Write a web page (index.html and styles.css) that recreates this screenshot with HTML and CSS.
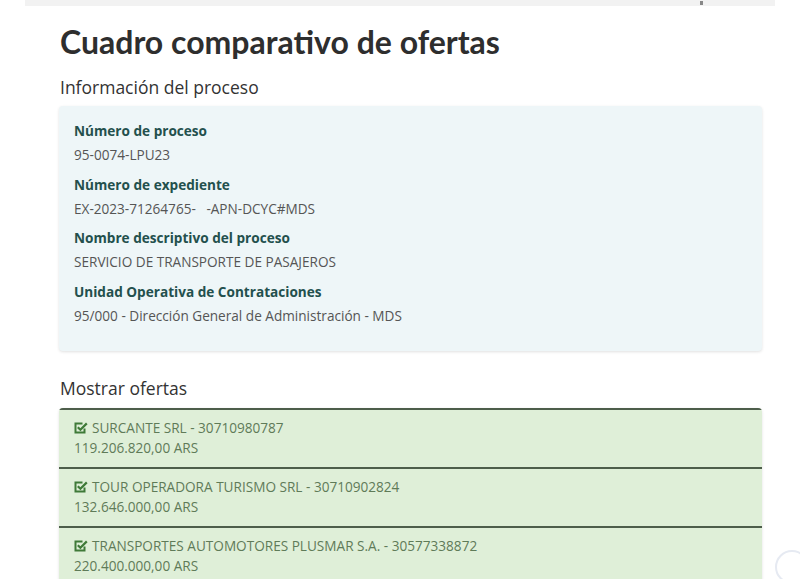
FILE: index.html
```html
<!DOCTYPE html>
<html lang="es">

<head>
    <meta charset="UTF-8">
    <meta name="viewport" content="width=device-width, initial-scale=1.0">
    <title>Cuadro comparativo de ofertas</title>
    <link rel="stylesheet" href="styles.css">
</head>

<body>
    <div class="topbar"><span class="topbar-mark"></span></div>

    <main class="page">
        <h1 class="title">Cuadro comparativo de ofertas</h1>

        <h2 class="section">Información del proceso</h2>
        <div class="info">
            <div class="field">
                <div class="label">Número de proceso</div>
                <div class="value">95-0074-LPU23</div>
            </div>
            <div class="field">
                <div class="label">Número de expediente</div>
                <div class="value">EX-2023-71264765- &nbsp; -APN-DCYC#MDS</div>
            </div>
            <div class="field">
                <div class="label">Nombre descriptivo del proceso</div>
                <div class="value">SERVICIO DE TRANSPORTE DE PASAJEROS</div>
            </div>
            <div class="field">
                <div class="label">Unidad Operativa de Contrataciones</div>
                <div class="value">95/000 - Dirección General de Administración - MDS</div>
            </div>
        </div>

        <h2 class="section section-offers">Mostrar ofertas</h2>
        <div class="offers">
            <div class="offer">
                <div class="offer-name">
                    <svg class="check" viewBox="0 0 14 14"><path d="M10.5 7.5v4h-9v-9h7" fill="none" stroke="currentColor" stroke-width="2"/><path d="M3.8 6.2l2.6 2.6 6.4-6.4" fill="none" stroke="currentColor" stroke-width="2.2"/></svg>
                    SURCANTE SRL - 30710980787
                </div>
                <div class="offer-amount">119.206.820,00 ARS</div>
            </div>
            <div class="offer">
                <div class="offer-name">
                    <svg class="check" viewBox="0 0 14 14"><path d="M10.5 7.5v4h-9v-9h7" fill="none" stroke="currentColor" stroke-width="2"/><path d="M3.8 6.2l2.6 2.6 6.4-6.4" fill="none" stroke="currentColor" stroke-width="2.2"/></svg>
                    TOUR OPERADORA TURISMO SRL - 30710902824
                </div>
                <div class="offer-amount">132.646.000,00 ARS</div>
            </div>
            <div class="offer">
                <div class="offer-name">
                    <svg class="check" viewBox="0 0 14 14"><path d="M10.5 7.5v4h-9v-9h7" fill="none" stroke="currentColor" stroke-width="2"/><path d="M3.8 6.2l2.6 2.6 6.4-6.4" fill="none" stroke="currentColor" stroke-width="2.2"/></svg>
                    TRANSPORTES AUTOMOTORES PLUSMAR S.A. - 30577338872
                </div>
                <div class="offer-amount">220.400.000,00 ARS</div>
            </div>
        </div>
    </main>

    <div class="float-btn"></div>
</body>

</html>
```

FILE: styles.css
```css
body {
    font-family: "Open Sans", Arial, sans-serif;
    background-color: #ffffff;
    color: #333333;
    margin: 0;
    padding: 0;
    overflow: hidden;
}

.topbar {
    height: 6px;
    margin: 0 25px;
    background-color: #f2f2f2;
    position: relative;
}

.topbar-mark {
    position: absolute;
    left: 675px;
    top: 1px;
    width: 3px;
    height: 4px;
    background-color: #888888;
}

.page {
    padding: 0 38px 0 59px;
}

.title {
    font-family: Lato, "Open Sans", sans-serif;
    font-size: 32px;
    font-weight: 700;
    color: #2e2e2e;
    margin: 17px 0 0 1px;
    line-height: 38px;
}

.section {
    font-family: "Open Sans", sans-serif;
    font-size: 17.5px;
    font-weight: 400;
    color: #333333;
    margin: 15px 0 0 1px;
    line-height: 22px;
}

.info {
    margin-top: 8px;
    background-color: #eef6f8;
    border-radius: 4px;
    box-shadow: 0 1px 3px rgba(0, 0, 0, 0.12);
    padding: 15px 15px 25px;
    display: flex;
    flex-direction: column;
    gap: 9.5px;
}

.label {
    font-size: 13.6px;
    font-weight: 700;
    color: #23504d;
    line-height: 20px;
}

.value {
    font-size: 13.6px;
    color: #555555;
    line-height: 20px;
    margin-top: 4px;
}

.section-offers {
    margin-top: 26px;
}

.offers {
    margin-top: 9px;
    border-radius: 4px 4px 0 0;
    overflow: hidden;
    box-shadow: 0 1px 3px rgba(0, 0, 0, 0.12);
}

.offer {
    background-color: #dfefd8;
    border-top: 2px solid #4d5e4b;
    padding: 8px 15px 9px;
    color: #5f7b58;
    font-size: 13.6px;
    line-height: 20px;
}

.offer-name {
    display: flex;
    align-items: center;
    gap: 4px;
}

.check {
    width: 14px;
    height: 14px;
    color: #3f7a38;
}

.float-btn {
    position: absolute;
    left: 775px;
    top: 550px;
    width: 30px;
    height: 30px;
    border-radius: 50%;
    border: 2px solid #e6eaf2;
}
```
